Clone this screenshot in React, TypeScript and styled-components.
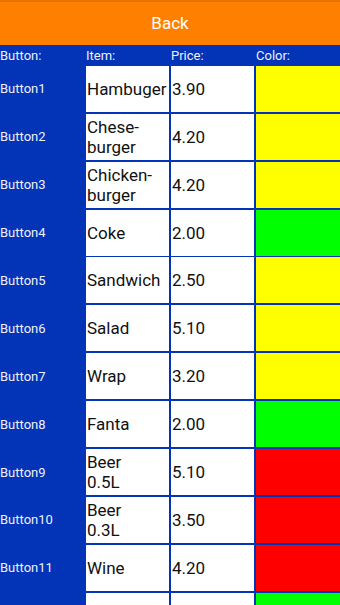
import React from "react";
import styled, { createGlobalStyle } from "styled-components";

const Global = createGlobalStyle`
  html, body { margin: 0; padding: 0; background: #0333b7; }
  body { font-family: Roboto, "Noto Sans", sans-serif; overflow: hidden; }
`;

const Page = styled.div`
  width: 340px;
  height: 605px;
  background: #0333b7;
  overflow: hidden;
`;

const BackBar = styled.button`
  display: flex;
  align-items: center;
  justify-content: center;
  width: 100%;
  height: 45px;
  border: none;
  border-top: 2px solid #e57300;
  background: #ff8000;
  color: #ffffff;
  font-family: Roboto, sans-serif;
  font-size: 17px;
  padding: 0 0 1px;
`;

const Grid = styled.div`
  display: grid;
  grid-template-columns: 84px 83px 83px 1fr;
  column-gap: 2px;
  row-gap: 1.9px;
`;

const HeadCell = styled.div`
  height: 19px;
  display: flex;
  align-items: center;
  color: #eef0f8;
  font-size: 13px;
  padding-top: 1px;
  box-sizing: border-box;
`;

const Label = styled.div`
  height: 46px;
  display: flex;
  align-items: center;
  color: #eef0f8;
  font-size: 13px;
`;

const Cell = styled.div`
  height: 46px;
  display: flex;
  align-items: center;
  background: #ffffff;
  color: #111111;
  font-size: 17px;
  line-height: 20px;
  padding-left: 1px;
  box-sizing: border-box;
`;

const Swatch = styled.div<{ $color: string }>`
  height: 46px;
  background: ${(p) => p.$color};
`;

const Y = "#ffff00";
const G = "#00ff00";
const R = "#ff0000";

const rows: { label: string; item: React.ReactNode; price: string; color: string }[] = [
  { label: "Button1", item: "Hambuger", price: "3.90", color: Y },
  { label: "Button2", item: <>Chese-<br />burger</>, price: "4.20", color: Y },
  { label: "Button3", item: <>Chicken-<br />burger</>, price: "4.20", color: Y },
  { label: "Button4", item: "Coke", price: "2.00", color: G },
  { label: "Button5", item: "Sandwich", price: "2.50", color: Y },
  { label: "Button6", item: "Salad", price: "5.10", color: Y },
  { label: "Button7", item: "Wrap", price: "3.20", color: Y },
  { label: "Button8", item: "Fanta", price: "2.00", color: G },
  { label: "Button9", item: <>Beer<br />0.5L</>, price: "5.10", color: R },
  { label: "Button10", item: <>Beer<br />0.3L</>, price: "3.50", color: R },
  { label: "Button11", item: "Wine", price: "4.20", color: R },
  { label: "", item: "", price: "", color: G },
];

export default function App() {
  return (
    <Page>
      <Global />
      <BackBar>Back</BackBar>
      <Grid>
        <HeadCell>Button:</HeadCell>
        <HeadCell>Item:</HeadCell>
        <HeadCell>Price:</HeadCell>
        <HeadCell>Color:</HeadCell>
        {rows.map((r, i) => (
          <React.Fragment key={i}>
            <Label>{r.label}</Label>
            <Cell>{r.item}</Cell>
            <Cell>{r.price}</Cell>
            <Swatch $color={r.color} />
          </React.Fragment>
        ))}
      </Grid>
    </Page>
  );
}
